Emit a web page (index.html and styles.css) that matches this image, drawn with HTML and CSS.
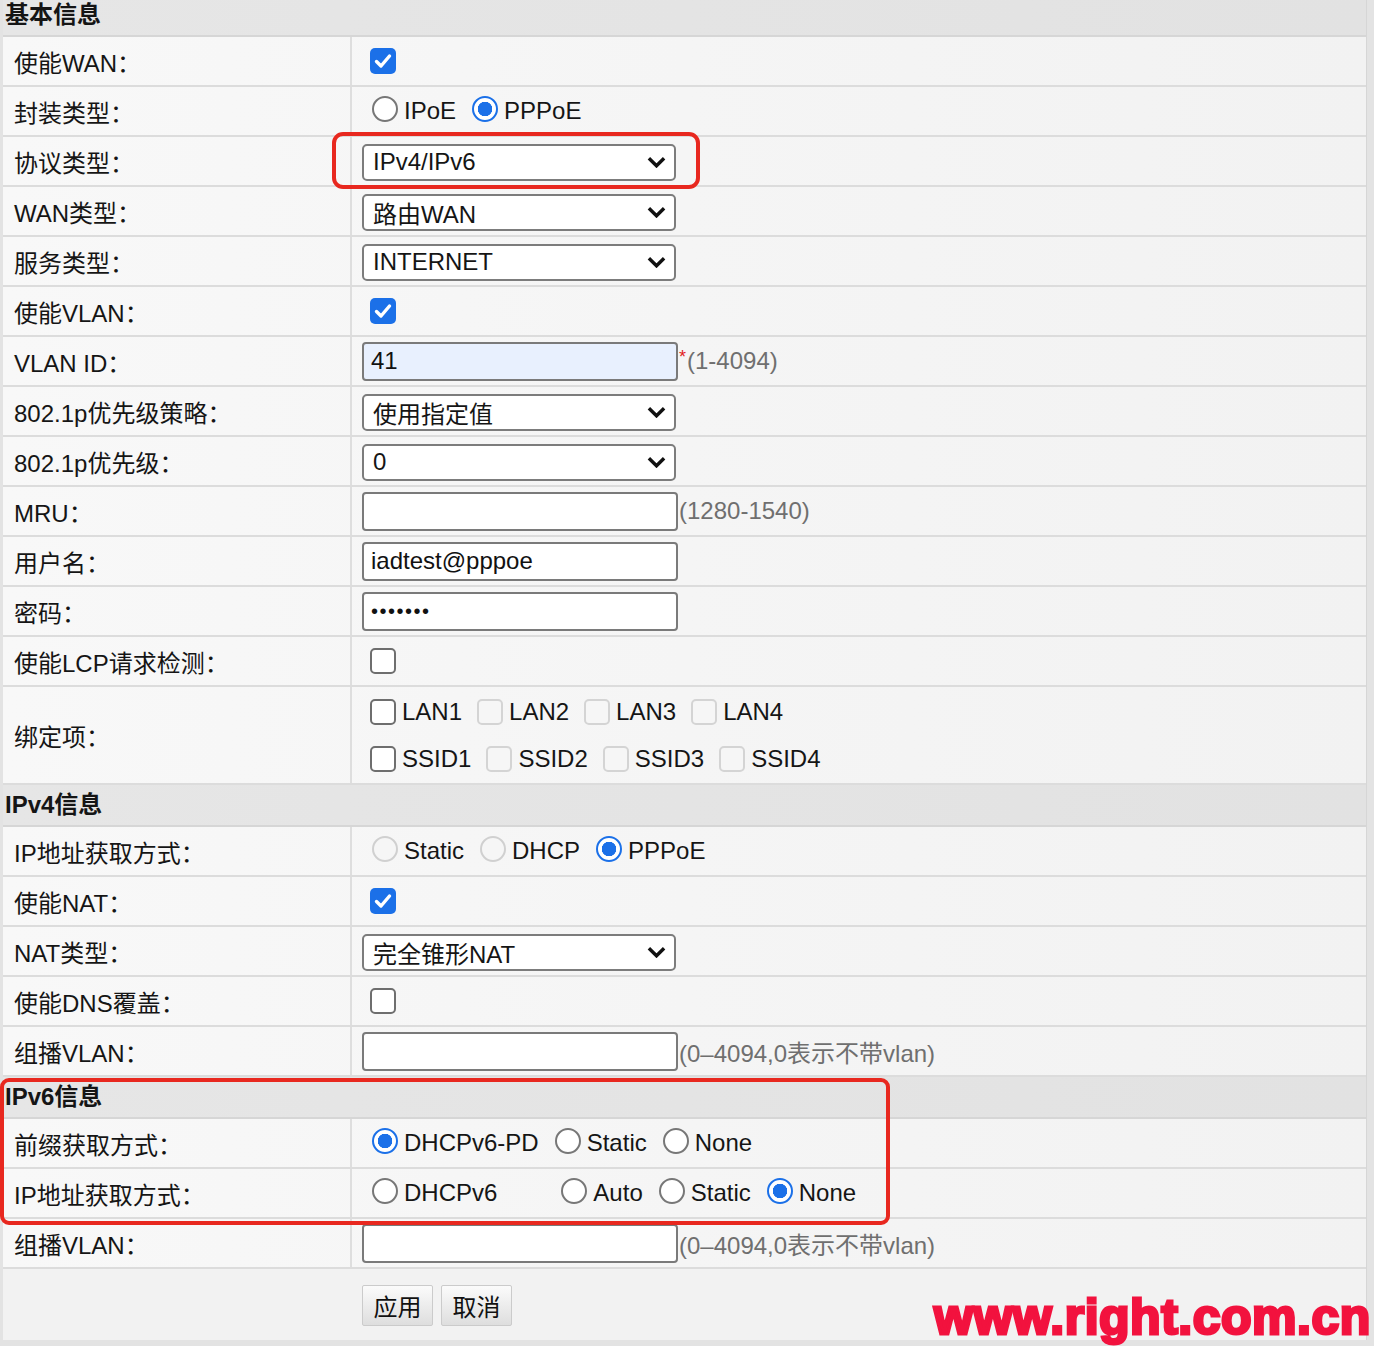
FILE: index.html
```html
<!DOCTYPE html>
<html lang="zh-CN">
  <head>
    <meta charset="UTF-8" />
    <meta name="viewport" content="width=device-width, initial-scale=1.0" />
    <title>WAN配置</title>
    <link rel="stylesheet" href="styles.css">
  </head>
  <body>
    <div class="page">
      <div class="sec">基本信息</div>
      <div class="row">
        <div class="lbl">使能WAN：</div>
        <div class="val"><span class="cb on"><svg viewBox="0 0 26 26"><path d="M6.5 13.5l4.5 4.5 8.5-10" /></svg></span></div>
      </div>
      <div class="row">
        <div class="lbl">封装类型：</div>
        <div class="val"><span class="rd"></span><span class="opt">IPoE</span><span class="rd on"></span><span class="opt">PPPoE</span></div>
      </div>
      <div class="row">
        <div class="lbl">协议类型：</div>
        <div class="val"><div class="sel">IPv4/IPv6<svg viewBox="0 0 20 12"><path d="M2 2l8 8 8-8" /></svg></div></div>
      </div>
      <div class="row">
        <div class="lbl">WAN类型：</div>
        <div class="val"><div class="sel">路由WAN<svg viewBox="0 0 20 12"><path d="M2 2l8 8 8-8" /></svg></div></div>
      </div>
      <div class="row">
        <div class="lbl">服务类型：</div>
        <div class="val"><div class="sel">INTERNET<svg viewBox="0 0 20 12"><path d="M2 2l8 8 8-8" /></svg></div></div>
      </div>
      <div class="row">
        <div class="lbl">使能VLAN：</div>
        <div class="val"><span class="cb on"><svg viewBox="0 0 26 26"><path d="M6.5 13.5l4.5 4.5 8.5-10" /></svg></span></div>
      </div>
      <div class="row">
        <div class="lbl">VLAN ID：</div>
        <div class="val"><input class="txt filled" type="text" value="41"><span class="req">*</span><span class="hint">(1-4094)</span></div>
      </div>
      <div class="row">
        <div class="lbl">802.1p优先级策略：</div>
        <div class="val"><div class="sel">使用指定值<svg viewBox="0 0 20 12"><path d="M2 2l8 8 8-8" /></svg></div></div>
      </div>
      <div class="row">
        <div class="lbl">802.1p优先级：</div>
        <div class="val"><div class="sel">0<svg viewBox="0 0 20 12"><path d="M2 2l8 8 8-8" /></svg></div></div>
      </div>
      <div class="row">
        <div class="lbl">MRU：</div>
        <div class="val"><input class="txt" type="text" value=""><span class="hint">(1280-1540)</span></div>
      </div>
      <div class="row">
        <div class="lbl">用户名：</div>
        <div class="val"><input class="txt" type="text" value="iadtest@pppoe"></div>
      </div>
      <div class="row">
        <div class="lbl">密码：</div>
        <div class="val"><input class="txt pwd" type="password" value="1234567"></div>
      </div>
      <div class="row">
        <div class="lbl">使能LCP请求检测：</div>
        <div class="val"><span class="cb"></span></div>
      </div>
      <div class="row tall">
        <div class="lbl">绑定项：</div>
        <div class="val lines">
          <div class="line"><span class="cb"></span><span class="opt">LAN1</span><span class="cb off"></span><span class="opt">LAN2</span><span class="cb off"></span><span class="opt">LAN3</span><span class="cb off"></span><span class="opt">LAN4</span></div>
          <div class="line"><span class="cb"></span><span class="opt">SSID1</span><span class="cb off"></span><span class="opt">SSID2</span><span class="cb off"></span><span class="opt">SSID3</span><span class="cb off"></span><span class="opt">SSID4</span></div>
        </div>
      </div>

      <div class="sec">IPv4信息</div>
      <div class="row">
        <div class="lbl">IP地址获取方式：</div>
        <div class="val"><span class="rd off"></span><span class="opt">Static</span><span class="rd off"></span><span class="opt">DHCP</span><span class="rd on"></span><span class="opt">PPPoE</span></div>
      </div>
      <div class="row">
        <div class="lbl">使能NAT：</div>
        <div class="val"><span class="cb on"><svg viewBox="0 0 26 26"><path d="M6.5 13.5l4.5 4.5 8.5-10" /></svg></span></div>
      </div>
      <div class="row">
        <div class="lbl">NAT类型：</div>
        <div class="val"><div class="sel">完全锥形NAT<svg viewBox="0 0 20 12"><path d="M2 2l8 8 8-8" /></svg></div></div>
      </div>
      <div class="row">
        <div class="lbl">使能DNS覆盖：</div>
        <div class="val"><span class="cb"></span></div>
      </div>
      <div class="row">
        <div class="lbl">组播VLAN：</div>
        <div class="val"><input class="txt" type="text" value=""><span class="hint">(0–4094,0表示不带vlan)</span></div>
      </div>

      <div class="sec">IPv6信息</div>
      <div class="row">
        <div class="lbl">前缀获取方式：</div>
        <div class="val"><span class="rd on"></span><span class="opt">DHCPv6-PD</span><span class="rd"></span><span class="opt">Static</span><span class="rd"></span><span class="opt">None</span></div>
      </div>
      <div class="row">
        <div class="lbl">IP地址获取方式：</div>
        <div class="val"><span class="rd"></span><span class="opt wide">DHCPv6</span><span class="rd"></span><span class="opt">Auto</span><span class="rd"></span><span class="opt">Static</span><span class="rd on"></span><span class="opt">None</span></div>
      </div>
      <div class="row">
        <div class="lbl">组播VLAN：</div>
        <div class="val"><input class="txt" type="text" value=""><span class="hint">(0–4094,0表示不带vlan)</span></div>
      </div>

      <div class="actions">
        <button class="btn">应用</button>
        <button class="btn">取消</button>
      </div>
    </div>

    <!-- highlight frames and site mark drawn on top of the form -->
    <div class="mark mark-proto"></div>
    <div class="mark mark-v6"></div>
    <div class="site">www.right.com.cn</div>
  </body>
</html>
```

FILE: styles.css
```css
body {
  margin: -4px 0 0 0;
  background-color: #e3e3e3;
  font-family: "Liberation Sans", "Noto Sans CJK SC", sans-serif;
  font-size: 24px;
  color: #151515;
}

.page {
  width: 1363px;
  margin-left: 3px;
  background-color: #f5f5f5;
  border-right: 1px solid #d6d6d6;
}

.sec {
  height: 40px;
  line-height: 40px;
  padding-left: 2px;
  font-weight: bold;
  background: linear-gradient(to right, #e6e6e6, #e2e2e2);
  border-bottom: 2px solid #d6d6d6;
}

.sec:first-child {
  height: 39px;
  line-height: 37px;
}

.row {
  display: grid;
  grid-template-columns: 349px 1fr;
  height: 50px;
  box-sizing: border-box;
  border-bottom: 2px solid #dcdcdc;
  background: linear-gradient(to right, #f8f8f8, #f2f2f2);
}

.row.tall {
  height: 98px;
}

.lbl {
  display: flex;
  align-items: center;
  padding-left: 11px;
  border-right: 2px solid #dedede;
}

.val {
  display: flex;
  align-items: center;
  padding-left: 10px;
}

.val.lines {
  flex-direction: column;
  align-items: flex-start;
  justify-content: center;
  gap: 21px;
}

.line {
  display: flex;
  align-items: center;
  height: 26px;
}

/* checkboxes */
.cb {
  width: 26px;
  height: 26px;
  box-sizing: border-box;
  margin-left: 8px;
  border: 2px solid #6e6e6e;
  border-radius: 5px;
  background-color: #fff;
  flex: none;
}

.cb.on {
  border: none;
  background-color: #1b70e8;
}

.cb.on svg {
  display: block;
  width: 26px;
  height: 26px;
  fill: none;
  stroke: #fff;
  stroke-width: 3.4;
  stroke-linecap: round;
  stroke-linejoin: round;
}

.cb.off {
  border-color: #d4d4d4;
  background-color: #f6f6f6;
  margin-left: 15px;
}

/* radio buttons */
.rd {
  width: 26px;
  height: 26px;
  box-sizing: border-box;
  margin-left: 16px;
  border: 2px solid #777;
  border-radius: 50%;
  background-color: #fff;
  flex: none;
  position: relative;
  top: -2px;
}

.rd:first-child {
  margin-left: 10px;
}

.rd.on {
  border: 2px solid #1b70e8;
  background: radial-gradient(circle, #1b70e8 0 7px, #fff 7.5px);
}

.rd.off {
  border-color: #d0d0d0;
  background-color: #f6f6f6;
}

.opt {
  margin-left: 6px;
}

.opt.wide {
  margin-right: 48px;
}

.line .opt {
  margin-left: 6px;
}

.line .cb:first-child {
  margin-left: 8px;
}

/* select boxes */
.sel {
  width: 314px;
  height: 37px;
  box-sizing: border-box;
  border: 2px solid #7c7c7c;
  border-radius: 5px;
  background-color: #fff;
  padding-left: 9px;
  display: flex;
  align-items: center;
  justify-content: space-between;
  padding-right: 8px;
  margin-top: 2px;
}

.sel svg {
  width: 19px;
  height: 12px;
  fill: none;
  stroke: #111;
  stroke-width: 3.6;
}

/* text inputs */
.txt {
  width: 316px;
  height: 39px;
  box-sizing: border-box;
  border: 2px solid #7a7a7a;
  border-radius: 4px;
  background-color: #fff;
  padding: 0 7px;
  font-family: inherit;
  font-size: 24px;
  color: #111;
  margin: 0;
}

.txt.filled {
  background-color: #e8f0fe;
}

.txt.pwd {
  font-size: 20px;
  letter-spacing: 1.5px;
}

.req {
  color: #e21b1b;
  font-size: 18px;
  align-self: flex-start;
  margin-top: 10px;
  margin-left: 1px;
}

.hint {
  color: #6f6f6f;
  margin-left: 1px;
}

/* bottom buttons */
.actions {
  height: 71px;
  padding-left: 359px;
  display: flex;
  align-items: center;
  gap: 8px;
  background-color: #f2f2f2;
}

.btn {
  width: 71px;
  height: 41px;
  margin-top: 2px;
  border: 1px solid #cbcbcb;
  border-radius: 2px;
  background: linear-gradient(#fbfbfb, #dedede);
  font-family: inherit;
  font-size: 24px;
  color: #111;
  padding: 0;
}

/* annotation overlays */
.mark {
  position: absolute;
  border: 4px solid #e8281f;
  border-radius: 11px;
  box-sizing: border-box;
}

.mark-proto {
  left: 332px;
  top: 132px;
  width: 368px;
  height: 57px;
}

.mark-v6 {
  left: 0;
  top: 1078px;
  width: 890px;
  height: 147px;
  border-radius: 9px;
}

.site {
  position: absolute;
  left: 934px;
  top: 1292px;
  font-family: "Liberation Sans", sans-serif;
  font-size: 50px;
  line-height: 50px;
  font-weight: bold;
  color: #f2123e;
  -webkit-text-stroke: 3px #f2123e;
  letter-spacing: 0.5px;
}
```
